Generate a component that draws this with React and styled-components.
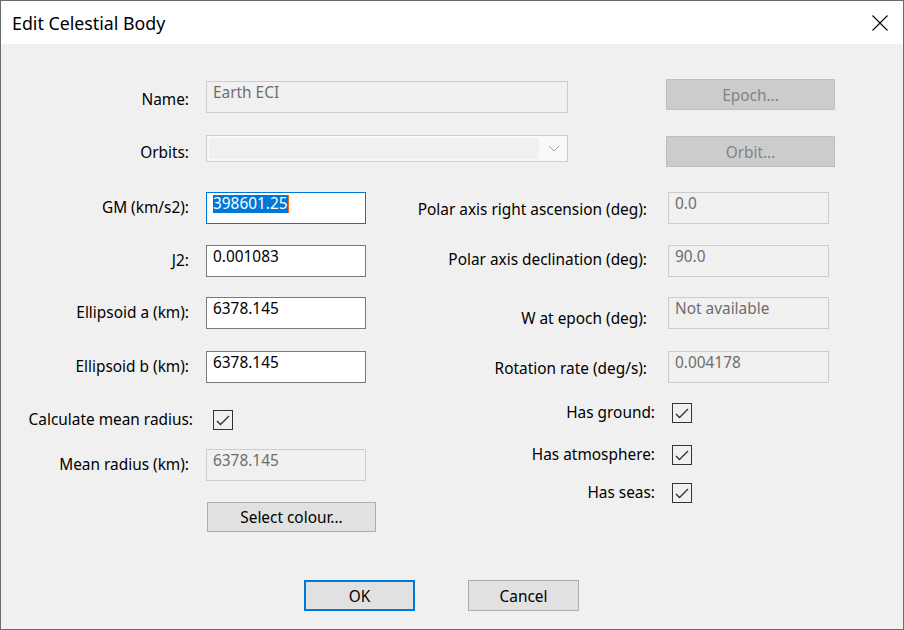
import React from 'react';
import styled, { createGlobalStyle } from 'styled-components';

const GlobalStyle = createGlobalStyle`
  html, body {
    margin: 0;
    padding: 0;
    background: #f0f0f0;
  }
`;

const Window = styled.div`
  width: 904px;
  height: 630px;
  box-sizing: border-box;
  border: 1px solid #6b6b6b;
  background: #f0f0f0;
  display: flex;
  flex-direction: column;
  font-family: "Noto Sans", "Segoe UI", sans-serif;
  font-size: 15.4px;
  color: #000;
`;

const TitleBar = styled.div`
  height: 43px;
  flex: none;
  background: #fff;
  display: flex;
  align-items: center;
  justify-content: space-between;
  padding-left: 11px;
`;

const Title = styled.div`
  font-size: 17.8px;
  color: #000;
`;

const CloseBtn = styled.div`
  width: 46px;
  height: 43px;
  display: flex;
  align-items: center;
  justify-content: center;
`;

const Body = styled.div`
  flex: 1;
  display: flex;
  flex-direction: column;
  padding-top: 35px;
`;

// rangée du haut (Name / Orbits)
const TopRow = styled.div`
  display: flex;
  align-items: flex-start;
  height: ${p => p.$h}px;
  margin-top: ${p => p.$mt || 0}px;
`;

const Label = styled.div`
  flex: none;
  width: ${p => p.$w}px;
  margin-right: ${p => p.$gap}px;
  margin-top: ${p => p.$mt ?? 6}px;
  text-align: right;
  line-height: 20px;
  white-space: nowrap;
`;

const TextBox = styled.div`
  flex: none;
  box-sizing: border-box;
  width: ${p => p.$w}px;
  height: 32px;
  margin-top: ${p => p.$mt || 0}px;
  padding: 1px 6px;
  line-height: 20px;
  white-space: nowrap;
  border: 1px solid ${p => (p.$focused ? '#0078d7' : p.$disabled ? '#cccccc' : '#7a7a7a')};
  background: ${p => (p.$disabled ? '#f0f0f0' : '#ffffff')};
  color: ${p => (p.$disabled ? '#6d6d6d' : '#000')};
`;

const Selected = styled.span`
  display: inline-block;
  height: 18px;
  line-height: 18px;
  background: #0078d7;
  color: #fff;
  border-right: 1px solid #f7630c;
`;

const Combo = styled.div`
  flex: none;
  box-sizing: border-box;
  width: 362px;
  height: 27px;
  border: 1px solid #cccccc;
  background: #f9f9f9;
  display: flex;
  align-items: flex-start;
  padding: 2px 0 0 2px;
`;

const ComboField = styled.div`
  width: 330px;
  height: 21px;
  background: #f0f0f0;
`;

const ComboArrow = styled.div`
  flex: 1;
  height: 21px;
  display: flex;
  align-items: center;
  justify-content: center;
  padding-left: 2px;
`;

const Button = styled.div`
  flex: none;
  box-sizing: border-box;
  width: ${p => p.$w || 169}px;
  height: ${p => p.$h || 31}px;
  margin-top: ${p => p.$mt || 0}px;
  margin-left: ${p => p.$ml || 0}px;
  display: flex;
  align-items: center;
  justify-content: center;
  padding-top: 1px;
  border: ${p => (p.$default ? '2px solid #0078d7' : p.$disabled ? '1px solid #bfbfbf' : '1px solid #adadad')};
  background: ${p => (p.$disabled ? '#cccccc' : '#e1e1e1')};
  color: ${p => (p.$disabled ? '#838383' : '#000')};
`;

const Lower = styled.div`
  display: flex;
  margin-top: 25px;
`;

const Column = styled.div`
  width: ${p => p.$w}px;
  display: flex;
  flex-direction: column;
`;

const FieldRow = styled.div`
  display: flex;
  align-items: flex-start;
  height: 32px;
  margin-top: ${p => p.$mt || 0}px;
`;

const CheckRow = styled.div`
  display: flex;
  align-items: center;
  height: 20px;
  margin-top: ${p => p.$mt || 0}px;

  ${Label} {
    margin-top: 0;
  }
`;

const Box = styled.div`
  flex: none;
  box-sizing: border-box;
  width: 20px;
  height: 20px;
  border: 1px solid #333;
  display: flex;
  align-items: center;
  justify-content: center;
`;

const Footer = styled.div`
  margin-top: auto;
  padding: 0 0 18px 303px;
  display: flex;
  align-items: center;
  gap: 53px;
`;

const Check = () => (
  <Box>
    <svg width="18" height="18" viewBox="0 0 18 18">
      <polyline points="3,10 6.5,13.5 15,5" fill="none" stroke="#333" strokeWidth="1.4" />
    </svg>
  </Box>
);

const Chevron = () => (
  <svg width="12" height="7" viewBox="0 0 12 7">
    <polyline points="1,1 6,6 11,1" fill="none" stroke="#a0a0a0" strokeWidth="1" />
  </svg>
);

const leftRows = [
  { label: 'J2:', value: '0.001083', mt: 21 },
  { label: 'Ellipsoid a (km):', value: '6378.145', mt: 20 },
  { label: 'Ellipsoid b (km):', value: '6378.145', mt: 22 },
];

const rightRows = [
  { label: 'Polar axis right ascension (deg):', value: '0.0', mt: 0, lmt: 8 },
  { label: 'Polar axis declination (deg):', value: '90.0', mt: 21, lmt: 5 },
  { label: 'W at epoch (deg):', value: 'Not available', mt: 20, lmt: 12 },
  { label: 'Rotation rate (deg/s):', value: '0.004178', mt: 22, lmt: 8 },
];

const rightChecks = [
  { label: 'Has ground:', mt: 20 },
  { label: 'Has atmosphere:', mt: 22 },
  { label: 'Has seas:', mt: 18 },
];

export default function App() {
  return (
    <>
      <GlobalStyle />
      <Window>
        <TitleBar>
          <Title>Edit Celestial Body</Title>
          <CloseBtn>
            <svg width="16" height="16" viewBox="0 0 16 16">
              <path d="M0.5 0.5 L15.5 15.5 M15.5 0.5 L0.5 15.5" stroke="#000" strokeWidth="1.1" />
            </svg>
          </CloseBtn>
        </TitleBar>
        <Body>
          <TopRow $h={34}>
            <Label $w={188} $gap={17} $mt={11}>Name:</Label>
            <TextBox $w={362} $mt={2} $disabled>Earth ECI</TextBox>
            <Button $ml={98} $disabled>Epoch...</Button>
          </TopRow>
          <TopRow $h={32} $mt={22}>
            <Label $w={188} $gap={17} $mt={8}>Orbits:</Label>
            <Combo>
              <ComboField />
              <ComboArrow><Chevron /></ComboArrow>
            </Combo>
            <Button $ml={98} $mt={1} $disabled>Orbit...</Button>
          </TopRow>

          <Lower>
            <Column $w={365}>
              <FieldRow>
                <Label $w={188} $gap={17}>GM (km/s2):</Label>
                <TextBox $w={160} $focused>
                  <Selected>398601.25</Selected>
                </TextBox>
              </FieldRow>
              {leftRows.map(r => (
                <FieldRow key={r.label} $mt={r.mt}>
                  <Label $w={188} $gap={17}>{r.label}</Label>
                  <TextBox $w={160}>{r.value}</TextBox>
                </FieldRow>
              ))}
              <CheckRow $mt={27}>
                <Label $w={192} $gap={20}>Calculate mean radius:</Label>
                <Check />
              </CheckRow>
              <FieldRow $mt={19}>
                <Label $w={188} $gap={17}>Mean radius (km):</Label>
                <TextBox $w={160} $disabled>6378.145</TextBox>
              </FieldRow>
              <Button $ml={206} $mt={21} $h={30}>Select colour...</Button>
            </Column>

            <Column $w={470}>
              {rightRows.map(r => (
                <FieldRow key={r.label} $mt={r.mt}>
                  <Label $w={281} $gap={21} $mt={r.lmt}>{r.label}</Label>
                  <TextBox $w={161} $disabled>{r.value}</TextBox>
                </FieldRow>
              ))}
              {rightChecks.map(c => (
                <CheckRow key={c.label} $mt={c.mt}>
                  <Label $w={289} $gap={17}>{c.label}</Label>
                  <Check />
                </CheckRow>
              ))}
            </Column>
          </Lower>

          <Footer>
            <Button $w={111} $default>OK</Button>
            <Button $w={111}>Cancel</Button>
          </Footer>
        </Body>
      </Window>
    </>
  );
}
